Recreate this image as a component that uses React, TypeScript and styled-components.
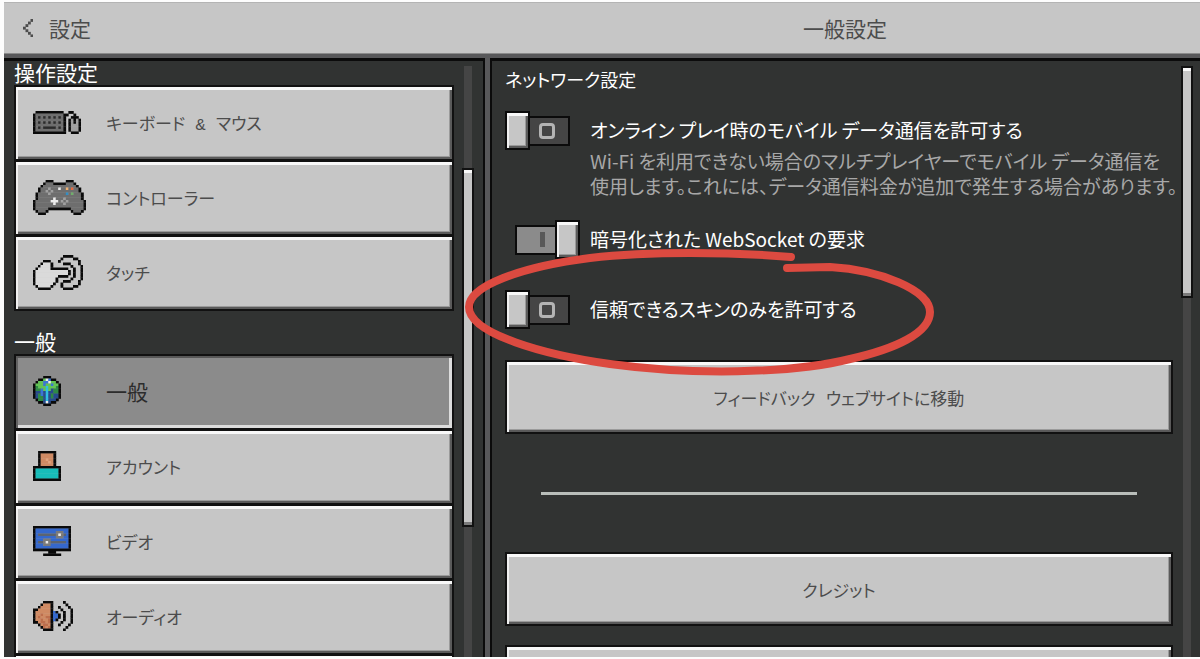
import React from "react";
import styled, { createGlobalStyle, css } from "styled-components";

const GlobalStyle = createGlobalStyle`
  *, *::before, *::after { box-sizing: border-box; }
  body {
    margin: 0;
    background: #fdfdfd;
    font-family: "Noto Sans CJK JP", "Noto Sans", sans-serif;
    font-feature-settings: "palt";
  }
  button { font: inherit; font-feature-settings: inherit; cursor: pointer; }
  h1, h2, p { margin: 0; font-weight: 400; }
`;

const Shell = styled.div`
  position: relative;
  display: flex;
  flex-direction: column;
  height: 100vh;
  padding: 2px 0 2px 4px;
  overflow: hidden;
`;

const Header = styled.header`
  display: grid;
  grid-template-columns: 21fr 31fr;
  column-gap: 5px;
  flex: none;
  height: 52px;
  background: #c6c6c6;
  border-top: 1px solid #b4b4b4;
  border-bottom: 1px solid #8b8b8b;
  color: #4c4c4c;
  font-size: 21px;
  line-height: 50px;
`;

const BackButton = styled.button`
  display: flex;
  align-items: center;
  justify-self: start;
  gap: 16px;
  padding: 0 19px;
  border: 0;
  background: none;
  color: inherit;
`;

const ScreenTitle = styled.h1`
  font-size: 21px;
  line-height: 50px;
  text-align: center;
`;

const Body = styled.div`
  display: grid;
  grid-template-columns: 21fr 31fr;
  column-gap: 5px;
  flex: 1;
  min-height: 0;
  padding-top: 4px;
  background: #58585a;
`;

const pane = css`
  display: flex;
  gap: 8px;
  min-width: 0;
  min-height: 0;
  overflow: hidden;
  background: #313332;
  border: 0 solid #0b0b0b;
  border-top-width: 3px;
`;

const Sidebar = styled.nav`
  ${pane}
  border-right-width: 2px;
  padding: 0 9px 0 10px;
`;

const Content = styled.main`
  ${pane}
  border-left-width: 2px;
  padding: 0 7px 0 13px;
`;

const Column = styled.div`
  flex: 1;
  min-width: 0;
`;

const NavSection = styled.section`
  & + & { padding-top: 19px; }
`;

const NavHeading = styled.h2`
  padding-bottom: 2px;
  color: #fff;
  font-size: 21px;
  line-height: 22px;
`;

const NavList = styled.div`
  display: grid;
  gap: 3px;
  padding: 2px;
  background: #111;
`;

const bevel = css`
  background: #c6c6c6;
  box-shadow: inset 0 3px 0 #f8f8f8, inset 2px 0 0 #f0f0f0,
    inset 0 -2px 0 #5a5a5a, inset -2px 0 0 #5a5a5a,
    inset 0 -3px 0 #9a9a9a, inset -3px 0 0 #9a9a9a;
`;

const controlFont = css`
  font-family: "Liberation Mono", "Noto Sans CJK JP", monospace;
  font-size: 17px;
`;

const NavItem = styled.button<{ $selected?: boolean }>`
  display: grid;
  grid-template-columns: 73px 1fr;
  align-items: center;
  height: 72px;
  padding: 0 17px 2px;
  border: 0;
  ${bevel}
  ${controlFont}
  color: #4c4c4c;
  text-align: left;
  ${(p) =>
    p.$selected &&
    css`
      background: #8b8b8b;
      color: #2c2c2c;
      font-size: 21px;
      box-shadow: inset 0 2px 0 #585858, inset 2px 0 0 #626262,
        inset 0 -3px 0 #dcdcdc, inset -3px 0 0 #dcdcdc;
    `}
`;

const ScrollTrack = styled.div<{ $lead: number }>`
  flex: none;
  width: 12px;
  margin-top: 5px;
  padding-top: ${(p) => p.$lead}px;
  background: linear-gradient(#454545, #454545) center / 8px 100% no-repeat;
`;

const ScrollThumb = styled.div<{ $size: number }>`
  height: ${(p) => p.$size}px;
  border: 2px solid #111;
  background: #c6c6c6;
  box-shadow: inset 0 3px 0 #f8f8f8, inset 0 -3px 0 #7a7a7a;
`;

const SectionHeading = styled.h2`
  padding-bottom: 14px;
  color: #fff;
  font-size: 18px;
  line-height: 36px;
`;

const SettingList = styled.div`
  display: grid;
  gap: 22px;
`;

const Setting = styled.div`
  display: grid;
  grid-template-columns: 75px 1fr;
  column-gap: 10px;
  align-items: start;
  min-height: 48px;
`;

const SwitchBox = styled.span`
  position: relative;
  display: block;
`;

const SwitchInput = styled.input`
  position: absolute;
  inset: 0;
  z-index: 1;
  width: 100%;
  height: 100%;
  margin: 0;
  opacity: 0;
  cursor: pointer;
`;

const SwitchFace = styled.span`
  display: flex;
  align-items: center;
  ${SwitchInput}:checked + & { flex-direction: row-reverse; }
`;

const Knob = styled.span`
  width: 25px;
  height: 39px;
  border: 2px solid #0b0b0b;
  ${bevel}
`;

const Groove = styled.span<{ $on: boolean }>`
  display: flex;
  align-items: center;
  justify-content: ${(p) => (p.$on ? "flex-end" : "flex-start")};
  width: 40px;
  height: 30px;
  padding: 0 10px 0 9px;
  border: 2px solid #0b0b0b;
  border-width: ${(p) => (p.$on ? "2px 0 2px 2px" : "2px 2px 2px 0")};
  background: ${(p) => (p.$on ? "#8b8b8b" : "#454545")};
`;

const OnMark = styled.span`
  width: 5px;
  height: 15px;
  background: #585858;
`;

const OffMark = styled.span`
  width: 16px;
  height: 16px;
  border: 3px solid #b4b4b4;
  border-radius: 4px;
`;

const SettingLabel = styled.label`
  display: block;
  color: #fff;
  font-size: 19px;
  line-height: 37px;
  white-space: nowrap;
`;

const Description = styled.p`
  color: #a8a8a8;
  font-size: 19px;
  line-height: 25px;
  white-space: nowrap;
`;

const ActionButton = styled.button`
  display: block;
  width: 100%;
  height: 74px;
  margin-bottom: 19px;
  border: 2px solid #111;
  ${bevel}
  ${controlFont}
  color: #4c4c4c;
`;

const Actions = styled.div`
  padding-top: 22px;
`;

const Divider = styled.hr`
  height: 3px;
  margin: 58px 36px 57px;
  border: 0;
  background: #b9beba;
`;

const Highlight = styled.svg`
  position: absolute;
  top: 240px;
  left: 456px;
  pointer-events: none;
`;

const palette: Record<string, string> = {
  K: "#0a0a0a",
  k: "#2b2b2b",
  C: "#4c4c4c",
  g: "#6e6e6e",
  l: "#a0a0a0",
  W: "#ececec",
  w: "#dadada",
  o: "#cf8a63",
  O: "#e2a27c",
  r: "#bd6e4c",
  q: "#e8683c",
  y: "#f0b070",
  b: "#2f8fc8",
  e: "#6fb06a",
  u: "#3568cc",
  d: "#5c6470",
  a: "#7a7a7a",
  t: "#17bdb9",
  L: "#63c455",
  f: "#2e8a45",
  n: "#3a74d6",
  N: "#274c8c",
  c: "#2fc0e6",
};

type Run = { x: number; y: number; length: number; tone: string };

/* Neighbouring pixels of one tone are drawn as a single bar. */
function toRuns(rows: string[]): Run[] {
  const runs: Run[] = [];
  rows.forEach((row, y) => {
    let x = 0;
    while (x < row.length) {
      let end = x + 1;
      while (row[end] === row[x]) end += 1;
      if (row[x] !== ".") runs.push({ x, y, length: end - x, tone: row[x] });
      x = end;
    }
  });
  return runs;
}

function PixelArt({ rows, width, height }: { rows: string[]; width: number; height: number }) {
  return (
    <svg
      width={width}
      height={height}
      viewBox={`0 0 ${rows[0].length} ${rows.length}`}
      preserveAspectRatio="none"
      aria-hidden="true"
    >
      {toRuns(rows).map((r) => (
        <rect
          key={`${r.x}-${r.y}`}
          x={r.x}
          y={r.y}
          width={r.length + 0.12}
          height={1.12}
          fill={palette[r.tone]}
        />
      ))}
    </svg>
  );
}

const chevron = ["...C", "..C.", ".C..", "C...", ".C..", "..C.", "...C"];

const keyboard = [
  ".KKKKKKKKKKK..KK...",
  "KgggggggggggKK..K..",
  "KgkgkgkgkgkgK..KKK.",
  "KgggggggggggK.KlKlK",
  "KgkgkgkgkgkgK.KlKlK",
  "KgggggggggggK.KlllK",
  "KgkgkkkkkgkgK.KlllK",
  "KgggggggggggK.KlllK",
  "KKKKKKKKKKKKK..KKK.",
];

const controller = [
  ".....KKK.....KKK.....",
  "....KgggKKKKKgggK....",
  "...KgggggggggggggK...",
  "..KggglgggWggygqggK..",
  "..KgglglggggggggggK..",
  ".KgggglggggggbgegggK.",
  ".KgggggggggggggggggK.",
  ".KggggggWggglggggggK.",
  "KggggggWWWglglggggggK",
  "KgggggggWggglgggggggK",
  "KgggggggggggggggggggK",
  "KgggggKKKKKKKKKgggggK",
  ".KgggK.........KgggK.",
  "..KKK...........KKK..",
];

const touch = [
  "............KKKK....",
  "...........K....KK..",
  "....KKK...K.......K.",
  "...KwwwK....KKK...K.",
  "..KwwwwK.......K...K",
  ".KwwwwwKKKKKKK..K..K",
  "KwwwwwwwwwwwwwK.K..K",
  "KwwwwwwwwwwwwwK.K..K",
  "KwwwwwwwwwKKKK..K..K",
  "KwwwwwwwwK.....K...K",
  "KwwwwwwwwK..KKK...K.",
  "KwwwwwwwK..K......K.",
  ".KwwwwwK...K....KK..",
  "..KKKKK.....KKKK....",
];

const globe = [
  "....KKK....",
  "..KKLWnKK..",
  ".KLLnnWLLK.",
  "KLLLnLLnLLK",
  "KfLLLcLLLfK",
  "KffnLcLNffK",
  "KNNnNcNNffK",
  "KNfnNcNfNNK",
  "KNffNcNfNNK",
  ".KffNcNNNK.",
  "..KKNWNKK..",
  "....KKK....",
];

const account = [
  "..KKKKKKK..",
  "..KoooooK..",
  "..KoooooK..",
  "..KooOooK..",
  "..KoooOoK..",
  "..KoooooK..",
  "KKKKKKKKKKK",
  "KtttttttttK",
  "KtttttttttK",
  "KtttttttttK",
  "KtttttttttK",
  "KKKKKKKKKKK",
];

const video = [
  "KKKKKKKKKKKKKKK",
  "KuuuuuuuuuuuuuK",
  "KuuuuuuuuaaauuK",
  "KudddddddaWaduK",
  "KuuuuuuuuaaauuK",
  "KuuuaaauuuuuuuK",
  "KuddaWadddddduK",
  "KuuuaaauuuuuuuK",
  "KuuuuuuuuuuuuuK",
  "KKKKKKKKKKKKKKK",
  "......KKK......",
  "....KKKKKKK....",
];

const audio = [
  "....KKKK....K...",
  "...KoooK.....K..",
  "..KooooK..K...K.",
  "KKoooooK...K...K",
  "KooooooKuK..K..K",
  "KooroooKuuK.K..K",
  "KoroorrKuuK.K..K",
  "KooroorKuK..K..K",
  "KKorrorK...K...K",
  "..KorroK..K...K.",
  "...KrorK.....K..",
  "....KKKK....K...",
];

const sections = [
  {
    title: "操作設定",
    items: [
      { label: "キーボード & マウス", icon: keyboard, w: 48, h: 23 },
      { label: "コントローラー", icon: controller, w: 53, h: 35 },
      { label: "タッチ", icon: touch, w: 50, h: 35 },
    ],
  },
  {
    title: "一般",
    items: [
      { label: "一般", icon: globe, w: 28, h: 30, selected: true },
      { label: "アカウント", icon: account, w: 28, h: 30 },
      { label: "ビデオ", icon: video, w: 38, h: 30 },
      { label: "オーディオ", icon: audio, w: 40, h: 30 },
      { label: "", icon: chevron, w: 0, h: 0 },
    ],
  },
];

function Toggle({ id, on }: { id: string; on: boolean }) {
  const [checked, setChecked] = React.useState(on);
  return (
    <SwitchBox>
      <SwitchInput id={id} type="checkbox" checked={checked} onChange={() => setChecked(!checked)} />
      <SwitchFace>
        <Knob />
        <Groove $on={checked}>{checked ? <OnMark /> : <OffMark />}</Groove>
      </SwitchFace>
    </SwitchBox>
  );
}

export default function App() {
  return (
    <>
      <GlobalStyle />
      <Shell>
        <Header>
          <BackButton type="button">
            <PixelArt rows={chevron} width={10} height={18} />
            設定
          </BackButton>
          <ScreenTitle>一般設定</ScreenTitle>
        </Header>
        <Body>
          <Sidebar>
            <Column>
              {sections.map((section) => (
                <NavSection key={section.title}>
                  <NavHeading>{section.title}</NavHeading>
                  <NavList>
                    {section.items.map((item) => (
                      <NavItem key={item.label} type="button" $selected={"selected" in item}>
                        <PixelArt rows={item.icon} width={item.w} height={item.h} />
                        <span>{item.label}</span>
                      </NavItem>
                    ))}
                  </NavList>
                </NavSection>
              ))}
            </Column>
            <ScrollTrack $lead={102}>
              <ScrollThumb $size={359} />
            </ScrollTrack>
          </Sidebar>
          <Content>
            <Column>
              <SectionHeading>ネットワーク設定</SectionHeading>
              <SettingList>
                <Setting>
                  <Toggle id="mobile-data" on={false} />
                  <div>
                    <SettingLabel htmlFor="mobile-data">
                      オンライン プレイ時のモバイル データ通信を許可する
                    </SettingLabel>
                    <Description>
                      Wi-Fi を利用できない場合のマルチプレイヤーでモバイル データ通信を
                      <br />
                      使用します。これには、データ通信料金が追加で発生する場合があります。
                    </Description>
                  </div>
                </Setting>
                <Setting>
                  <Toggle id="websocket" on />
                  <SettingLabel htmlFor="websocket">暗号化された WebSocket の要求</SettingLabel>
                </Setting>
                <Setting>
                  <Toggle id="trusted-skins" on={false} />
                  <SettingLabel htmlFor="trusted-skins">信頼できるスキンのみを許可する</SettingLabel>
                </Setting>
              </SettingList>
              <Actions>
                <ActionButton type="button">フィードバック ウェブサイトに移動</ActionButton>
                <Divider />
                <ActionButton type="button">クレジット</ActionButton>
                <ActionButton type="button" />
              </Actions>
            </Column>
            <ScrollTrack $lead={0}>
              <ScrollThumb $size={232} />
            </ScrollTrack>
          </Content>
        </Body>
        <Highlight width="484" height="140" viewBox="456 240 484 140" aria-hidden="true">
          <path
            d="M791 257 C730 252 650 251 590 258 C520 267 469 286 469 307 C469 334 545 355 610 364 C690 375 790 374 850 359 C895 349 930 333 930 312 C930 290 880 270 830 267 L787 268"
            fill="none"
            stroke="#dc4a40"
            strokeWidth="8"
            strokeLinecap="round"
            strokeLinejoin="round"
          />
        </Highlight>
      </Shell>
    </>
  );
}
